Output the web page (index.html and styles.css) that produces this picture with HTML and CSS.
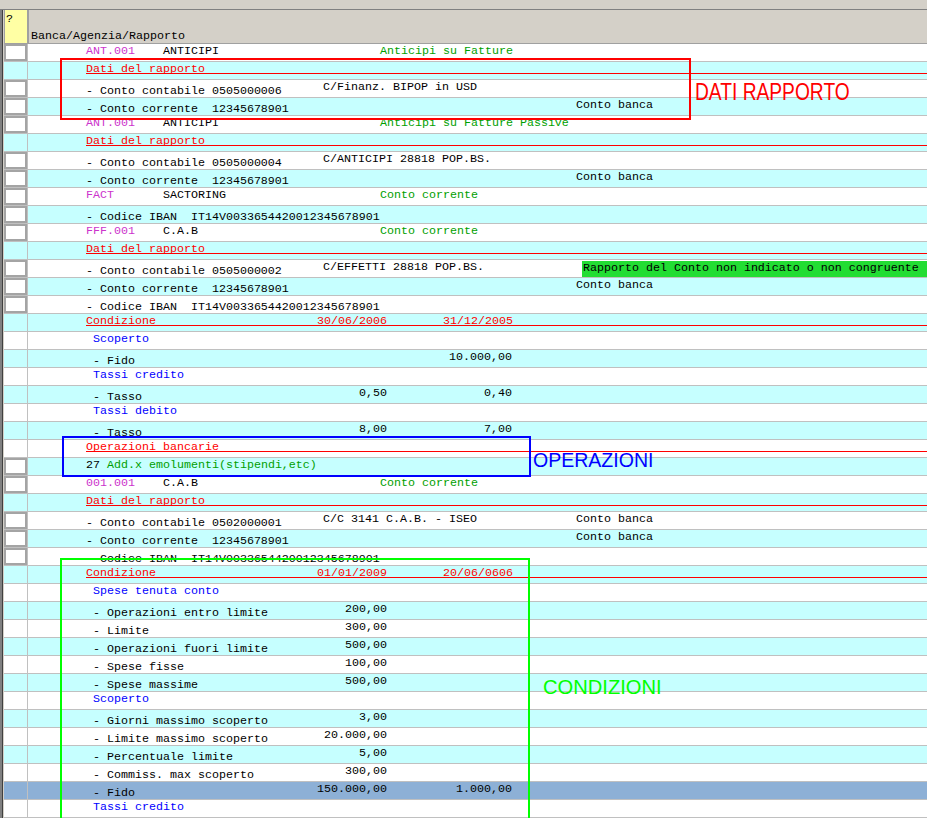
FILE: index.html
```html
<!DOCTYPE html>
<html lang="it">
<head>
<meta charset="utf-8">
<title>Banca/Agenzia/Rapporto</title>
<link rel="stylesheet" href="styles.css">
</head>
<body>
<div class="page">
  <div class="topbar"></div>
  <div class="body">
    <div class="edge"></div>
    <div class="table">
      <div class="row head"><div class="lc q">?</div><div class="hd">Banca/Agenzia/Rapporto</div></div>

      <div class="row"><div class="lc box"></div><div class="main"><span class="code">ANT.001</span><span class="name">ANTICIPI</span><span class="type">Anticipi su Fatture</span></div></div>
      <div class="row c"><div class="lc"></div><div class="main"><span class="sec">Dati del rapporto</span></div></div>
      <div class="row"><div class="lc box"></div><div class="main"><span class="lab">- Conto contabile 0505000006</span><span class="desc">C/Finanz. BIPOP in USD</span></div></div>
      <div class="row c"><div class="lc box"></div><div class="main"><span class="lab">- Conto corrente  12345678901</span><span class="bank">Conto banca</span></div></div>
      <div class="row"><div class="lc box"></div><div class="main"><span class="code">ANT.001</span><span class="name">ANTICIPI</span><span class="type">Anticipi su Fatture Passive</span></div></div>
      <div class="row c"><div class="lc"></div><div class="main"><span class="sec">Dati del rapporto</span></div></div>
      <div class="row"><div class="lc box"></div><div class="main"><span class="lab">- Conto contabile 0505000004</span><span class="desc">C/ANTICIPI 28818 POP.BS.</span></div></div>
      <div class="row c"><div class="lc box"></div><div class="main"><span class="lab">- Conto corrente  12345678901</span><span class="bank">Conto banca</span></div></div>
      <div class="row"><div class="lc box"></div><div class="main"><span class="code">FACT</span><span class="name">SACTORING</span><span class="type">Conto corrente</span></div></div>
      <div class="row c"><div class="lc box"></div><div class="main"><span class="lab">- Codice IBAN  IT14V0033654420012345678901</span></div></div>
      <div class="row"><div class="lc box"></div><div class="main"><span class="code">FFF.001</span><span class="name">C.A.B</span><span class="type">Conto corrente</span></div></div>
      <div class="row c"><div class="lc"></div><div class="main"><span class="sec">Dati del rapporto</span></div></div>
      <div class="row"><div class="lc box"></div><div class="main"><span class="lab">- Conto contabile 0505000002</span><span class="desc">C/EFFETTI 28818 POP.BS.</span><span class="msg">Rapporto del Conto non indicato o non congruente</span></div></div>
      <div class="row c"><div class="lc box"></div><div class="main"><span class="lab">- Conto corrente  12345678901</span><span class="bank">Conto banca</span></div></div>
      <div class="row"><div class="lc box"></div><div class="main"><span class="lab">- Codice IBAN  IT14V0033654420012345678901</span></div></div>
      <div class="row c"><div class="lc"></div><div class="main"><span class="sec">Condizione</span><span class="v1 red">30/06/2006</span><span class="v2 red">31/12/2005</span></div></div>
      <div class="row"><div class="lc"></div><div class="main"><span class="sub">Scoperto</span></div></div>
      <div class="row c"><div class="lc"></div><div class="main"><span class="lab in">- Fido</span><span class="v2">10.000,00</span></div></div>
      <div class="row"><div class="lc"></div><div class="main"><span class="sub">Tassi credito</span></div></div>
      <div class="row c"><div class="lc"></div><div class="main"><span class="lab in">- Tasso</span><span class="v1">0,50</span><span class="v2">0,40</span></div></div>
      <div class="row"><div class="lc"></div><div class="main"><span class="sub">Tassi debito</span></div></div>
      <div class="row c"><div class="lc"></div><div class="main"><span class="lab in">- Tasso</span><span class="v1">8,00</span><span class="v2">7,00</span></div></div>
      <div class="row"><div class="lc"></div><div class="main"><span class="sec">Operazioni bancarie</span></div></div>
      <div class="row c"><div class="lc box"></div><div class="main"><span class="ops">27 <span class="grn">Add.x emolumenti(stipendi,etc)</span></span></div></div>
      <div class="row"><div class="lc box"></div><div class="main"><span class="code">001.001</span><span class="name">C.A.B</span><span class="type">Conto corrente</span></div></div>
      <div class="row c"><div class="lc"></div><div class="main"><span class="sec">Dati del rapporto</span></div></div>
      <div class="row"><div class="lc box"></div><div class="main"><span class="lab">- Conto contabile 0502000001</span><span class="desc">C/C 3141 C.A.B. - ISEO</span><span class="bank">Conto banca</span></div></div>
      <div class="row c"><div class="lc box"></div><div class="main"><span class="lab">- Conto corrente  12345678901</span><span class="bank">Conto banca</span></div></div>
      <div class="row"><div class="lc box"></div><div class="main"><span class="lab">- Codice IBAN  IT14V0033654420012345678901</span></div></div>
      <div class="row c"><div class="lc"></div><div class="main"><span class="sec">Condizione</span><span class="v1 red">01/01/2009</span><span class="v2 red">20/06/0606</span></div></div>
      <div class="row"><div class="lc"></div><div class="main"><span class="sub">Spese tenuta conto</span></div></div>
      <div class="row c"><div class="lc"></div><div class="main"><span class="lab in">- Operazioni entro limite</span><span class="v1">200,00</span></div></div>
      <div class="row"><div class="lc"></div><div class="main"><span class="lab in">- Limite</span><span class="v1">300,00</span></div></div>
      <div class="row c"><div class="lc"></div><div class="main"><span class="lab in">- Operazioni fuori limite</span><span class="v1">500,00</span></div></div>
      <div class="row"><div class="lc"></div><div class="main"><span class="lab in">- Spese fisse</span><span class="v1">100,00</span></div></div>
      <div class="row c"><div class="lc"></div><div class="main"><span class="lab in">- Spese massime</span><span class="v1">500,00</span></div></div>
      <div class="row"><div class="lc"></div><div class="main"><span class="sub">Scoperto</span></div></div>
      <div class="row c"><div class="lc"></div><div class="main"><span class="lab in">- Giorni massimo scoperto</span><span class="v1">3,00</span></div></div>
      <div class="row"><div class="lc"></div><div class="main"><span class="lab in">- Limite massimo scoperto</span><span class="v1">20.000,00</span></div></div>
      <div class="row c"><div class="lc"></div><div class="main"><span class="lab in">- Percentuale limite</span><span class="v1">5,00</span></div></div>
      <div class="row"><div class="lc"></div><div class="main"><span class="lab in">- Commiss. max scoperto</span><span class="v1">300,00</span></div></div>
      <div class="row sel"><div class="lc"></div><div class="main"><span class="lab in">- Fido</span><span class="v1">150.000,00</span><span class="v2">1.000,00</span></div></div>
      <div class="row"><div class="lc"></div><div class="main"><span class="sub">Tassi credito</span></div></div>
    </div>
  </div>

  <div class="mark mark-red"></div>
  <div class="note note-red">DATI RAPPORTO</div>
  <div class="mark mark-blue"></div>
  <div class="note note-blue">OPERAZIONI</div>
  <div class="mark mark-green"></div>
  <div class="note note-green">CONDIZIONI</div>
</div>
</body>
</html>
```

FILE: styles.css
```css
* { box-sizing: border-box; }
html, body { margin: 0; padding: 0; background: #fff; }
body {
  font-family: "Liberation Mono", "DejaVu Sans Mono", monospace;
  font-size: 11.67px;
  color: #000;
}
.page {
  position: relative;
  width: 927px;
  height: 818px;
  overflow: hidden;
  display: flex;
  flex-direction: column;
}
.topbar {
  height: 10px;
  flex: none;
  background: #d4d0c8;
  border-bottom: 1px solid #808080;
}
.body { display: flex; flex: 1; }
.edge {
  width: 4px;
  flex: none;
  background: linear-gradient(to right, #808080 0 2px, #404040 2px 3px, #d4d0c8 3px 4px);
}
.table { flex: 1; display: flex; flex-direction: column; }
.row {
  display: flex;
  height: 18px;
  flex: none;
  border-bottom: 1px solid #c0c0c0;
  background: #fff;
}
.row.c { background: #c6ffff; }
.row.sel { background: #8db0d6; }
.lc {
  width: 24px;
  flex: none;
  border-right: 1px solid #c0c0c0;
}
.lc.box {
  background: #fff;
  box-shadow: inset 0 0 0 2px #a4a4a4;
}
.row.head {
  height: 34px;
  background: #d4d0c8;
  border-bottom: 1px solid #a0a0a0;
}
.lc.q {
  background: #ffffa4;
  border-right: 1px solid #a0a0a0;
  box-shadow: inset 1px 0 0 #a0a0a0;
  padding: 3px 0 0 2px;
  line-height: 12px;
}
.hd {
  flex: 1;
  display: flex;
  align-items: flex-end;
  padding: 0 0 1px 2px;
  line-height: 12px;
  border-left: 1px solid #a0a0a0;
}
.main {
  flex: 1;
  display: grid;
  grid-template-columns: 58px 7px 70px 153px 7px 57px 7px 56px 69px 64px 6px minmax(0, 1fr);
  grid-template-rows: 17px;
}
.main > span {
  grid-row: 1;
  white-space: pre;
  line-height: 12px;
  padding-top: 1px;
}
.code { grid-column: 2; color: #cc33cc; }
.name { grid-column: 4; }
.type { grid-column: 7; color: #00a000; }
.desc { grid-column: 6; }
.bank { grid-column: 11; }
.msg {
  grid-column: 12 / 13;
  background: #22dd33;
  margin-top: 1px;
  height: 16px;
  padding-left: 1px;
}
.main > .msg { padding-top: 1px; }
.main > .lab { grid-column: 2; padding-top: 5px; }
.main > .lab.in { grid-column: 3; }
.v1 { grid-column: 5 / 8; text-align: right; }
.v2 { grid-column: 9 / 10; text-align: right; }
.main > .sec {
  grid-column: 2 / 13;
  color: #ff0000;
  height: 12px;
  padding-top: 1px;
  border-bottom: 1px solid #ff0000;
}
.main > .red { color: #ff0000; padding-top: 1px; }
.sub { grid-column: 3; color: #0000ff; }
.ops { grid-column: 2; }
.grn { color: #00a000; }

.mark { position: absolute; border: 2px solid; }
.mark-red { left: 60px; top: 58px; width: 631px; height: 62px; border-color: #ff0000; }
.mark-blue { left: 62px; top: 436px; width: 469px; height: 41px; border-color: #0000ff; }
.mark-green { left: 60px; top: 558px; width: 470px; height: 280px; border-color: #00ff00; }
.note {
  position: absolute;
  font-family: "Liberation Sans", Arial, sans-serif;
  white-space: nowrap;
  transform-origin: 0 0;
}
.note-red { left: 695px; top: 80px; font-size: 24px; line-height: 24px; color: #ff0000; transform: scaleX(0.8); }
.note-blue { left: 533px; top: 449px; font-size: 21px; line-height: 21px; color: #0000ff; transform: scaleX(0.93); }
.note-green { left: 543px; top: 676px; font-size: 21px; line-height: 21px; color: #00ff00; transform: scaleX(0.96); }
```
